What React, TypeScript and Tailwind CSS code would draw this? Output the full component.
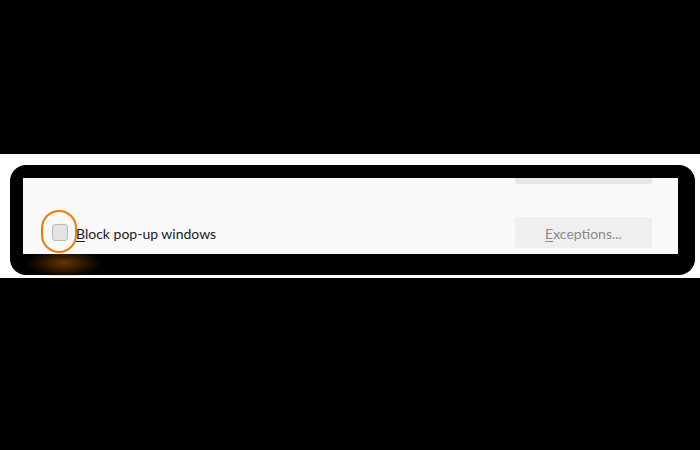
export default function App() {
  return (
    <div className="w-[700px] h-[450px] bg-black flex flex-col" style={{ fontFamily: 'Lato, "Liberation Sans", sans-serif' }}>
      <div className="h-[154px]" />
      <div className="h-[124px] bg-white pt-[11px] pl-[10px] pr-[5px] pb-[3px]">
        <div className="relative h-full bg-black rounded-[16px] pt-[13px] pl-[13px] pr-[17px] pb-[21px]">
          {/* glow under the highlighted checkbox */}
          <div className="absolute left-[18px] top-[84px] w-[72px] h-[28px] rounded-full bg-[radial-gradient(ellipse_at_center,rgba(190,95,0,0.55),rgba(110,55,0,0.2)_55%,transparent_75%)]" />
          <div className="relative h-full bg-[#f9f9f9] flex flex-col">
            <div className="flex justify-end pr-[26px]">
              <div className="w-[137px] h-[6px] bg-[#e6e6e6] rounded-b-[3px]" />
            </div>
            <div className="flex items-center mt-[33px] pl-[29px] pr-[26px]">
              <div className="w-[16px] h-[17px] rounded-[3px] bg-[#e3e3e3] border border-[#b9b9b9]" />
              <span className="ml-[8px] text-[14px] leading-[20px] text-[#1a1a1a] pt-[2px]">
                <u className="underline-offset-2">B</u>lock pop-up windows
              </span>
              <button className="ml-auto w-[137px] h-[31px] rounded-[3px] bg-[#efefef] text-[14px] leading-[20px] text-[#8a8a8a] pt-[2px]">
                <u className="underline-offset-2">E</u>xceptions...
              </button>
            </div>
          </div>
          {/* highlight ring */}
          <div className="absolute left-[31px] top-[45px] w-[36px] h-[43px] rounded-full border-2 border-[#f07d00]" />
        </div>
      </div>
    </div>
  );
}
